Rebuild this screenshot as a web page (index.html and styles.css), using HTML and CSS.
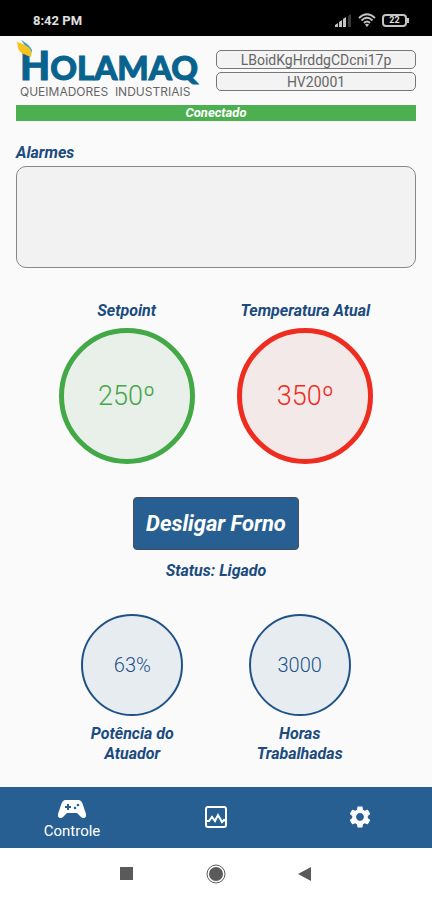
FILE: index.html
```html
<!DOCTYPE html>
<html lang="pt-BR">
<head>
    <meta charset="UTF-8">
    <meta name="viewport" content="width=device-width, initial-scale=1.0">
    <title>Holamaq</title>
    <link rel="stylesheet" href="styles.css">
</head>
<body>
    <div class="status-bar">
        <span class="clock">8:42 PM</span>
        <div class="status-icons">
            <svg width="17" height="13" viewBox="0 0 17 13">
                <path d="M0 13V11L3 9V13zM4 13V8L7 6V13zM8 13V5L11 3V13z" fill="#c4c4c4"/>
                <path d="M13 13V2L16 0V13z" fill="#3a3a3a"/>
            </svg>
            <svg width="18" height="14" viewBox="0 0 18 14" fill="none" stroke="#c4c4c4" stroke-width="1.800">
                <path d="M1 5Q9 -2.500 17 5M3.500 7.500Q9 2 14.500 7.500M6 10Q9 7 12 10"/>
                <path d="M7 11.500Q9 10 11 11.500L9 14z" fill="#c4c4c4" stroke="none"/>
            </svg>
            <div class="battery">22</div>
        </div>
    </div>

    <main>
        <header>
            <div class="logo">
                <svg class="flame" width="16" height="18" viewBox="0 0 16 18">
                    <path d="M4 0C7 2 12 4 15 10L14 15L9 7z" fill="#35a3c4"/>
                    <path d="M0 2C5 3 8 5 11 7C14 9 15 12 14 17C9 15 2 13 1 8z" fill="#f8c320"/>
                </svg>
                <div class="logo-name"><span class="logo-initial">H</span>OLAMAQ</div>
                <div class="logo-tagline">QUEIMADORES&nbsp; INDUSTRIAIS</div>
            </div>
            <div class="device">
                <input type="text" value="LBoidKgHrddgCDcni17p" aria-label="ID" readonly>
                <input type="text" value="HV20001" aria-label="Modelo" readonly>
            </div>
        </header>

        <div class="connection">Conectado</div>

        <label for="alarms">Alarmes</label>
        <textarea id="alarms" readonly></textarea>

        <div class="gauges">
            <div class="gauge">
                <h2>Setpoint</h2>
                <div class="circle green">250º</div>
            </div>
            <div class="gauge">
                <h2>Temperatura Atual</h2>
                <div class="circle red">350º</div>
            </div>
        </div>

        <button class="power">Desligar Forno</button>
        <p class="status">Status: Ligado</p>

        <div class="gauges">
            <div class="gauge small">
                <div class="circle blue">63%</div>
                <h2>Potência do Atuador</h2>
            </div>
            <div class="gauge small">
                <div class="circle blue">3000</div>
                <h2>Horas Trabalhadas</h2>
            </div>
        </div>
    </main>

    <nav class="tabs">
        <a class="active" href="#controle">
            <svg width="28" height="18" viewBox="0 0 28 18">
                <path d="M8 0H20C23 0 24 2 25 5L28 14C29 18 25 19 23 17L19 13H9L5 17C3 19 -1 18 0 14L3 5C4 2 5 0 8 0z" fill="#fff"/>
                <path d="M9 4H11V6H13V8H11V10H9V8H7V6H9z" fill="#285f92"/>
                <circle cx="20" cy="5" r="1.300" fill="#285f92"/>
                <circle cx="17" cy="8" r="1.300" fill="#285f92"/>
            </svg>
            Controle
        </a>
        <a href="#grafico" aria-label="Gráfico">
            <svg width="22" height="22" viewBox="0 0 22 22" fill="none" stroke="#fff" stroke-width="2">
                <rect x="1" y="1" width="20" height="20" rx="2"/>
                <path d="M2 15L4 15L7 11L10 15L13 9L17 16L19 14L20 15"/>
            </svg>
        </a>
        <a href="#config" aria-label="Configurações">
            <svg width="26" height="26" viewBox="0 0 24 24" fill="#fff">
                <path d="M19.140 12.940c.04-.3.06-.61.06-.94 0-.32-.02-.64-.07-.94l2.030-1.580c.18-.14.23-.41.12-.61l-1.920-3.320c-.12-.22-.37-.29-.59-.22l-2.390.96c-.5-.38-1.030-.7-1.620-.94l-.36-2.540c-.04-.24-.24-.41-.48-.41h-3.840c-.24 0-.43.17-.47.41l-.36 2.540c-.59.24-1.130.57-1.620.94l-2.390-.96c-.22-.08-.47 0-.59.22L2.740 8.870c-.12.21-.08.47.12.61l2.030 1.580c-.05.3-.09.63-.09.94s.02.64.07.94l-2.030 1.580c-.18.14-.23.41-.12.61l1.920 3.320c.12.22.37.29.59.22l2.390-.96c.5.38 1.030.7 1.620.94l.36 2.540c.05.24.24.41.48.41h3.840c.24 0 .44-.17.47-.41l.36-2.540c.59-.24 1.130-.56 1.620-.94l2.390.96c.22.08.47 0 .59-.22l1.920-3.320c.12-.22.07-.47-.12-.61l-2.010-1.580zM12 15.600c-1.980 0-3.600-1.620-3.600-3.600s1.620-3.600 3.600-3.600 3.600 1.620 3.600 3.600-1.620 3.600-3.600 3.600z"/>
            </svg>
        </a>
    </nav>

    <div class="system-nav">
        <button aria-label="Recentes">
            <svg width="22" height="22" viewBox="0 0 22 22"><rect x="4" y="4" width="13" height="13" fill="#5a5a5a"/></svg>
        </button>
        <button aria-label="Início">
            <svg width="22" height="22" viewBox="0 0 22 22">
                <circle cx="11" cy="11" r="9" fill="none" stroke="#5a5a5a"/>
                <circle cx="11" cy="11" r="7" fill="#5a5a5a"/>
            </svg>
        </button>
        <button aria-label="Voltar">
            <svg width="22" height="22" viewBox="0 0 22 22"><path d="M4 11L17 4V18z" fill="#5a5a5a"/></svg>
        </button>
    </div>
</body>
</html>
```

FILE: styles.css
```css
* {
    box-sizing: border-box;
}

body {
    margin: 0;
    min-height: 100vh;
    display: flex;
    flex-direction: column;
    font-family: Roboto, sans-serif;
    background-color: #fafafa;
    color: #1b4b80;
}

/* Phone status bar */
.status-bar {
    height: 36px;
    padding: 4px 22px 0 33px;
    display: flex;
    justify-content: space-between;
    align-items: center;
    background-color: #000;
    color: #e0e0e0;
}

.clock {
    font-size: 13px;
    font-weight: 700;
}

.status-icons {
    display: flex;
    align-items: center;
    gap: 6px;
}

.battery {
    position: relative;
    width: 25px;
    height: 13px;
    margin-right: 3px;
    border: 2px solid #c4c4c4;
    border-radius: 4px;
    font-size: 9px;
    font-weight: 700;
    line-height: 9px;
    text-align: center;
}

.battery::after {
    content: "";
    position: absolute;
    right: -4px;
    top: 2px;
    width: 2px;
    height: 5px;
    background-color: #c4c4c4;
}

main {
    flex: 1;
    padding: 4px 16px 20px;
    display: flex;
    flex-direction: column;
}

/* Header */
header {
    display: grid;
    grid-template-columns: 1fr 1fr;
    align-items: start;
    margin-bottom: 7px;
}

.logo {
    position: relative;
    padding: 7px 0 0 4px;
    white-space: nowrap;
}

.flame {
    position: absolute;
    left: 1px;
    top: 0;
}

.logo-name {
    height: 39px;
    font-family: Lato, sans-serif;
    font-size: 33px;
    font-weight: 900;
    line-height: 36px;
    color: #08638f;
    -webkit-text-stroke: 1px #08638f;
}

.logo-initial {
    font-size: 39px;
}

.logo-tagline {
    font-family: Inter, sans-serif;
    font-size: 12px;
    line-height: 12px;
    color: #666;
}

.device {
    padding-top: 10px;
    display: flex;
    flex-direction: column;
    gap: 3px;
}

.device input {
    width: 100%;
    height: 19px;
    padding: 0;
    border: 1px solid #777;
    border-radius: 5px;
    background-color: #f3f3f3;
    color: #666;
    font-family: inherit;
    font-size: 14px;
    font-weight: 400;
    text-align: center;
}

.connection {
    background-color: #4caf50;
    color: #fff;
    font-size: 13px;
    font-weight: 700;
    font-style: italic;
    line-height: 16px;
    text-align: center;
}

/* Alarms */
label,
h2,
.status {
    margin: 0;
    font-size: 16px;
    font-weight: 700;
    font-style: italic;
    line-height: 20px;
}

label {
    margin-top: 22px;
}

textarea {
    height: 102px;
    margin: 3px 0 33px;
    border: 1px solid #888;
    border-radius: 10px;
    background-color: #f2f2f2;
    resize: none;
}

/* Gauges */
.gauges {
    display: flex;
    justify-content: space-evenly;
}

.gauge {
    width: 136px;
    text-align: center;
}

.gauge.small {
    width: 102px;
}

.circle {
    height: 136px;
    margin-top: 7px;
    display: flex;
    align-items: center;
    justify-content: center;
    border: 5px solid;
    border-radius: 50%;
    font-size: 27px;
    font-weight: 300;
}

.small .circle {
    height: 102px;
    margin: 0 0 8px;
    border-width: 2px;
    font-size: 20px;
}

.green {
    background-color: #e9efe9;
    color: #43a846;
}

.red {
    background-color: #f3e9e8;
    color: #ee2d20;
}

.blue {
    background-color: #e7ecf0;
    color: #1f5288;
}

.power {
    align-self: center;
    height: 53px;
    margin-top: 33px;
    padding: 0 12px;
    border: 1px solid #454f59;
    border-radius: 4px;
    background-color: #285f92;
    color: #fff;
    font-family: inherit;
    font-size: 22px;
    font-weight: 700;
    font-style: italic;
}

.status {
    margin: 11px 0 33px;
    text-align: center;
}

/* Bottom tabs */
.tabs {
    height: 61px;
    display: grid;
    grid-template-columns: repeat(3, 1fr);
    background-color: #285f92;
}

.tabs a {
    padding-bottom: 2px;
    display: flex;
    flex-direction: column;
    align-items: center;
    justify-content: center;
    gap: 4px;
    color: #fff;
    font-size: 15px;
    line-height: 18px;
    text-decoration: none;
}

.tabs .active {
    padding: 4px 0 0;
}

.system-nav {
    height: 52px;
    display: flex;
    align-items: center;
    justify-content: center;
    gap: 67px;
    background-color: #fff;
}

.system-nav button {
    padding: 0;
    border: 0;
    background: none;
    line-height: 0;
}
```
